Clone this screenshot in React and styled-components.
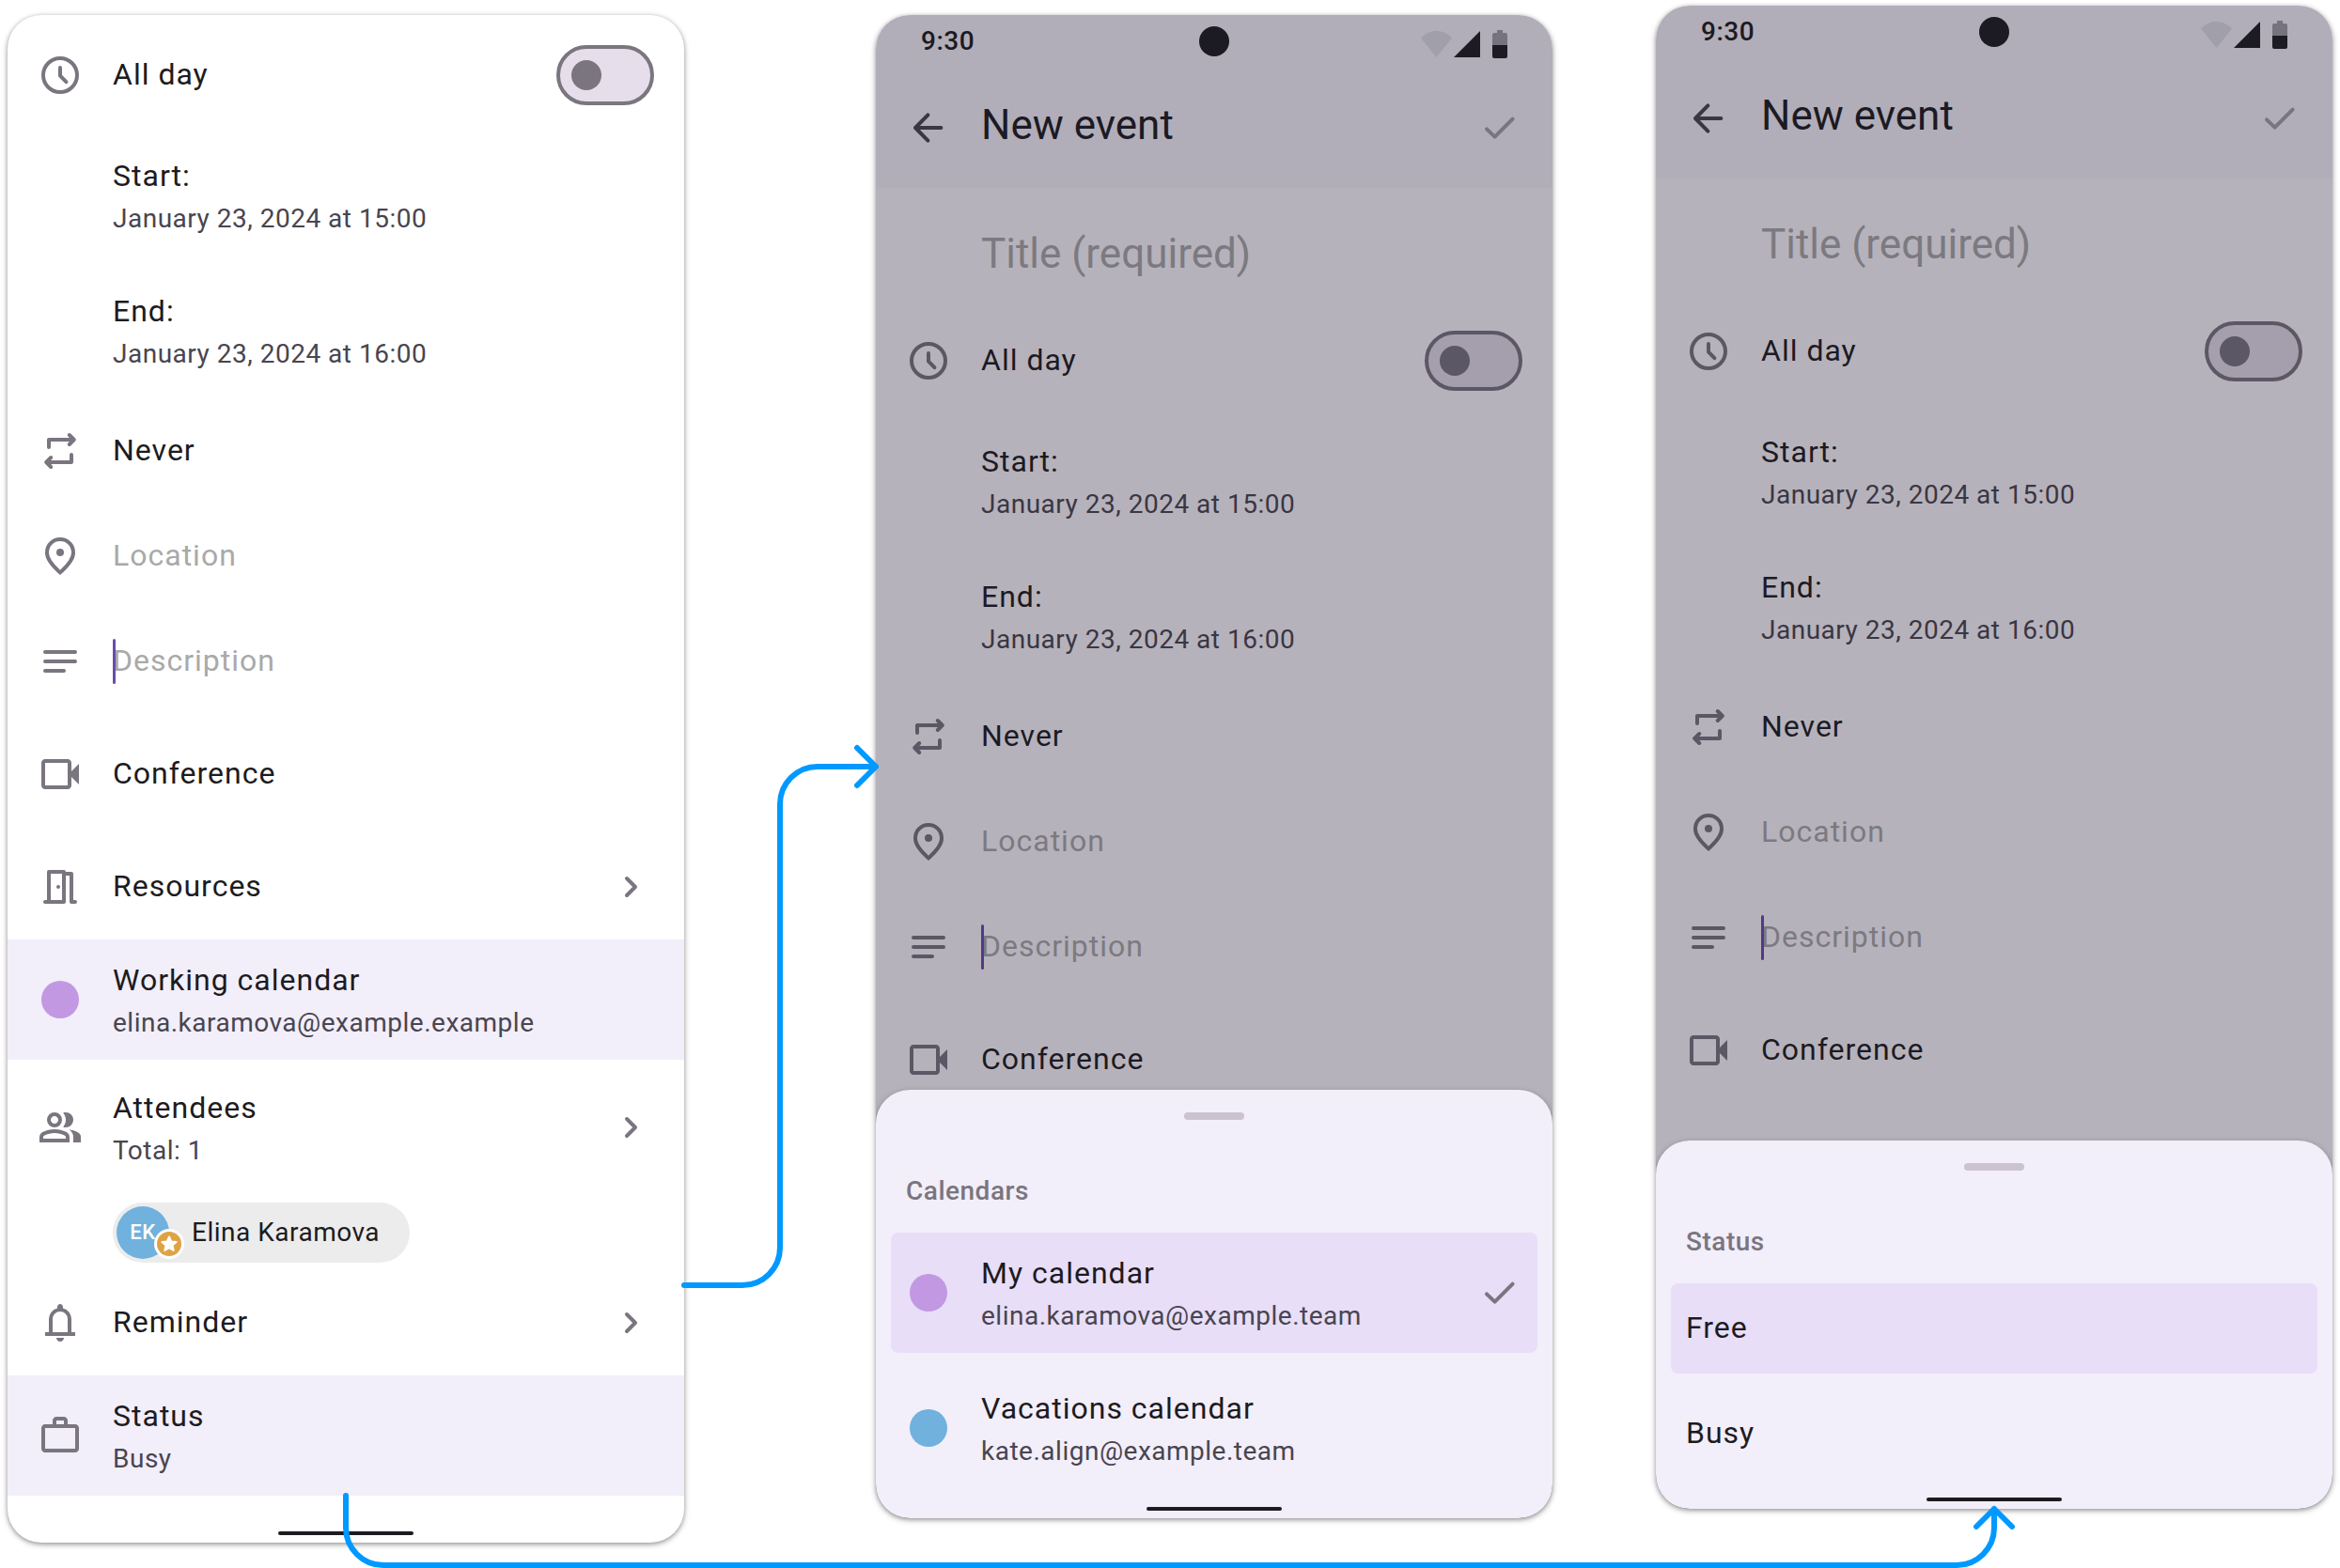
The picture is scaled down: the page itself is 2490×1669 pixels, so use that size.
import React from "react";
import styled, { createGlobalStyle, css } from "styled-components";

const color = {
  ink: "#1d1b20",
  inkSoft: "#49454f",
  icon: "#7a757f",
  hint: "#a9a9a9",
  page: "#fffbff",
  bar: "#f8f5fd",
  surface: "#f2eefa",
  selected: "#e8def8",
  purple: "#c298e2",
  blue: "#70b1dd",
  flow: "#0099ff",
};

const GlobalStyle = createGlobalStyle`
  *, *::before, *::after { box-sizing: border-box; }
  body {
    margin: 0;
    background: #fff;
    color: ${color.ink};
    font-family: Roboto, "Liberation Sans", sans-serif;
  }
  button, input { font: inherit; color: inherit; }
`;

/* ---------- text styles ---------- */

const bodyLarge = css`
  font-size: 32px;
  line-height: 48px;
  letter-spacing: 1px;
`;

const bodyMedium = css`
  font-size: 28px;
  line-height: 40px;
  letter-spacing: 0.018em;
`;

const titleLarge = css`
  font-size: 44px;
  line-height: 56px;
`;

/* ---------- canvas ---------- */

const Canvas = styled.main`
  position: relative;
  display: grid;
  grid-template-columns: 720fr 204fr 720fr 110fr 720fr;
  align-items: start;
  padding: 6px 8px 27px;
`;

const Connectors = styled.svg`
  position: absolute;
  inset: 0;
  width: 100%;
  height: 100%;
  pointer-events: none;
  fill: none;
  stroke: ${color.flow};
  stroke-width: 6px;
  stroke-linecap: round;
  stroke-linejoin: round;
`;

const Card = styled.section`
  grid-column: ${(p) => p.$column};
  margin-top: ${(p) => (p.$lowered ? "10px" : 0)};
  position: relative;
  overflow: hidden;
  display: flex;
  flex-direction: column;
  border-radius: 36px;
  background: #fff;
  box-shadow: 0 2px 6px rgba(0, 0, 0, 0.3), 0 1px 4px rgba(0, 0, 0, 0.2);
`;

const FormCard = styled(Card)`
  padding-top: 8px;
`;

const PhoneCard = styled(Card)`
  aspect-ratio: 9 / 20;
  background: ${color.page};
`;

/* ---------- rows ---------- */

const rowHeights = { line: "112px", tall: "128px", double: "144px" };

const rowStyle = css`
  display: flex;
  align-items: center;
  gap: 32px;
  width: 100%;
  min-height: ${(p) => rowHeights[p.$size || "line"]};
  padding: 0 32px;
  border: 0;
  background: ${(p) => (p.$tinted ? color.surface : "transparent")};
  text-align: left;
`;

const RowButton = styled.button`
  ${rowStyle}
  cursor: pointer;
`;

const RowLabel = styled.label`
  ${rowStyle}
`;

const Lead = styled.span`
  flex: none;
  display: grid;
  place-items: center;
  width: 48px;
  height: 48px;
  color: ${color.icon};
`;

const Dot = styled.span`
  width: 40px;
  height: 40px;
  border-radius: 50%;
  background: ${(p) => p.$fill};
`;

const TextBlock = styled.span`
  flex: 1;
  min-width: 0;
  display: flex;
  flex-direction: column;
`;

const Primary = styled.span`
  ${bodyLarge}
  padding-bottom: 2px;
`;

const Secondary = styled.span`
  ${bodyMedium}
  color: ${color.inkSoft};
`;

const Field = styled.span`
  flex: 1;
  min-width: 0;
  position: relative;
  display: flex;
`;

const Caret = styled.span`
  position: absolute;
  left: 0;
  top: 0;
  bottom: 0;
  width: 3px;
  border-radius: 2px;
  background: #6a4bb0;
`;

const TextInput = styled.input`
  ${bodyLarge}
  width: 100%;
  height: 48px;
  padding: 0 0 2px;
  border: 0;
  outline: 0;
  background: transparent;
  &::placeholder {
    color: ${color.hint};
    opacity: 1;
  }
`;

const Switch = styled.input`
  appearance: none;
  flex: none;
  display: flex;
  align-items: center;
  width: 104px;
  height: 64px;
  margin: 0;
  padding: 0 12px;
  border: 4px solid ${color.icon};
  border-radius: 32px;
  background: #e6deeb;
  &::before {
    content: "";
    width: 32px;
    height: 32px;
    border-radius: 50%;
    background: ${color.icon};
  }
  &:checked {
    justify-content: flex-end;
  }
`;

const ChipLine = styled.div`
  display: flex;
  padding: 8px 32px 8px 112px;
`;

const Chip = styled.button`
  ${bodyMedium}
  display: flex;
  align-items: center;
  gap: 24px;
  height: 64px;
  padding: 0 32px 0 4px;
  border: 0;
  border-radius: 32px;
  background: #ececec;
`;

const Avatar = styled.span`
  position: relative;
  display: grid;
  place-items: center;
  width: 56px;
  height: 56px;
  border-radius: 50%;
  background: ${color.blue};
  color: #fff;
  font-size: 22px;
  font-weight: 500;
`;

const Badge = styled.svg`
  position: absolute;
  right: -16px;
  bottom: 0;
  width: 32px;
  height: 32px;
`;

const HomeBar = styled.div`
  align-self: center;
  width: 20%;
  height: 4px;
  margin: ${(p) => (p.$roomy ? "38px" : "20px")} 0 8px;
  border-radius: 2px;
  background: ${color.ink};
`;

/* ---------- phone header ---------- */

const Header = styled.header`
  background: ${color.bar};
`;

const StatusBar = styled.div`
  ${bodyMedium}
  display: grid;
  grid-template-columns: 1fr auto 1fr;
  align-items: center;
  height: 56px;
  padding: 0 48px;
  font-weight: 500;
`;

const Camera = styled.span`
  width: 32px;
  height: 32px;
  border-radius: 50%;
  background: ${color.ink};
`;

const StatusIcons = styled.svg`
  justify-self: end;
  width: 92px;
  height: 40px;
`;

const AppBar = styled.div`
  display: flex;
  align-items: center;
  gap: 32px;
  height: 128px;
  padding: 0 32px;
`;

const ScreenTitle = styled.h1`
  ${titleLarge}
  flex: 1;
  margin: 0 0 6px;
  font-weight: 400;
`;

const IconButton = styled.button`
  display: grid;
  place-items: center;
  width: 48px;
  height: 48px;
  padding: 0;
  border: 0;
  background: transparent;
  color: ${(p) => (p.$muted ? "#a4a1a8" : color.inkSoft)};
`;

const TitleLine = styled.div`
  padding: 42px 32px 30px 112px;
`;

const TitleInput = styled(TextInput)`
  ${titleLarge}
  display: block;
  height: 56px;
  padding: 0;
  letter-spacing: normal;
`;

/* ---------- bottom sheet ---------- */

const Scrim = styled.div`
  position: absolute;
  inset: 0;
  background: rgba(29, 25, 43, 0.32);
`;

const Sheet = styled.div`
  position: absolute;
  left: 0;
  right: 0;
  bottom: 0;
  display: flex;
  flex-direction: column;
  padding-top: 24px;
  border-radius: 36px;
  background: ${color.surface};
  box-shadow: 0 2px 6px rgba(0, 0, 0, 0.3);
`;

const Grip = styled.span`
  align-self: center;
  width: 64px;
  height: 8px;
  border-radius: 4px;
  background: #cbc3d0;
`;

const SheetLabel = styled.h2`
  ${bodyMedium}
  margin: 56px 32px 24px;
  color: ${color.icon};
  font-weight: 500;
`;

const Options = styled.div`
  display: flex;
  flex-direction: column;
  gap: 16px;
  padding: 0 16px;
`;

const Option = styled.button`
  display: flex;
  align-items: center;
  gap: 32px;
  min-height: ${(p) => (p.$compact ? "96px" : "128px")};
  padding: 0 16px;
  border: 0;
  border-radius: 8px;
  background: ${(p) => (p["aria-pressed"] ? color.selected : "transparent")};
  text-align: left;
`;

/* ---------- icons ---------- */

const Glyph = styled.svg`
  width: 48px;
  height: 48px;
  ${(p) =>
    p.$line
      ? css`
          fill: none;
          stroke: currentColor;
          stroke-width: 2px;
          stroke-linecap: round;
          stroke-linejoin: round;
        `
      : css`
          fill: currentColor;
        `}
`;

const Line = ({ children }) => (
  <Glyph $line viewBox="0 0 24 24" aria-hidden="true">
    {children}
  </Glyph>
);

const Solid = ({ d, children }) => (
  <Glyph viewBox="0 -960 960 960" aria-hidden="true">
    <path d={d} />
    {children}
  </Glyph>
);

const ClockIcon = () => (
  <Line>
    <circle cx="12" cy="12" r="9" />
    <path d="M12 8v4.300l3.200 3.300" />
  </Line>
);
const RepeatIcon = () => (
  <Line>
    <path d="M6 10V6h13.400M16.900 3.500 19.400 6l-2.500 2.500M18 14v4H4.600M7.100 15.500 4.600 18l2.500 2.500" />
  </Line>
);
const PinIcon = () => (
  <Solid d="M480-186q122-112 181-203.500T720-552q0-109-69.500-178.500T480-800q-101 0-170.500 69.500T240-552q0 71 59 162.500T480-186Zm0 106Q319-217 239.500-334.500T160-552q0-150 96.500-239T480-880q127 0 223.500 89T800-552q0 100-79.500 217.500T480-80Z">
    <circle cx="480" cy="-560" r="80" />
  </Solid>
);
const NotesIcon = () => (
  <Line>
    <path d="M4 7h16M4 12h16M4 17h10" />
  </Line>
);
const VideoIcon = () => (
  <Solid d="M160-160q-33 0-56.500-23.500T80-240v-480q0-33 23.500-56.500T160-800h480q33 0 56.500 23.500T720-720v180l160-160v440L720-420v180q0 33-23.500 56.500T640-160H160Zm0-80h480v-480H160v480Z" />
);
const DoorIcon = () => (
  <Line>
    <path d="M4 20h10V4H6v16M14 5h4v15h2" />
    <circle cx="11" cy="12" r="1" fill="currentColor" stroke="none" />
  </Line>
);
const ChevronIcon = () => (
  <Line>
    <path d="M9.500 7.500 14 12l-4.500 4.500" />
  </Line>
);
const GroupIcon = () => (
  <Solid d="M40-160v-112q0-34 17.500-62.500T104-378q62-31 126-46.500T360-440q66 0 130 15.500T616-378q29 15 46.500 43.500T680-272v112H40Zm720 0v-120q0-44-24.500-84.500T666-434q51 6 96 20.500t84 35.500q36 20 55 44.500t19 53.500v120H760ZM360-480q-66 0-113-47t-47-113q0-66 47-113t113-47q66 0 113 47t47 113q0 66-47 113t-113 47Zm400-160q0 66-47 113t-113 47q-11 0-28-2.500t-28-5.500q27-32 41.500-71t14.500-81q0-42-14.500-81T544-792q14-5 28-6.500t28-1.500q66 0 113 47t47 113ZM120-240h480v-32q0-11-5.500-20T580-306q-54-27-109-40.500T360-360q-56 0-111 13.500T140-306q-9 5-14.500 14t-5.500 20v32Zm240-320q33 0 56.500-23.500T440-640q0-33-23.500-56.500T360-720q-33 0-56.500 23.500T280-640q0 33 23.500 56.500T360-560Z" />
);
const BellIcon = () => (
  <Solid d="M160-200v-80h80v-280q0-83 50-147.500T420-792v-28q0-25 17.500-42.500T480-880q25 0 42.500 17.500T540-820v28q80 20 130 84.500T720-560v280h80v80H160ZM480-80q-33 0-56.500-23.500T400-160h160q0 33-23.500 56.500T480-80ZM320-280h320v-280q0-66-47-113t-113-47q-66 0-113 47t-47 113v280Z" />
);
const CaseIcon = () => (
  <Solid d="M160-120q-33 0-56.500-23.500T80-200v-440q0-33 23.500-56.500T160-720h160v-80q0-33 23.500-56.500T400-880h160q33 0 56.500 23.500T640-800v80h160q33 0 56.500 23.500T880-640v440q0 33-23.500 56.500T800-120H160Zm0-80h640v-440H160v440Zm240-520h160v-80H400v80Z" />
);
const BackIcon = () => (
  <Line>
    <path d="M18.700 12H5M11.700 5.200 5 12l6.700 6.800" />
  </Line>
);
const CheckIcon = () => (
  <Line>
    <path d="M5 12.700l4.300 4.100 9.500-9.500" />
  </Line>
);

/* ---------- form ---------- */

function Row({ icon, title, note, more, size, tinted }) {
  return (
    <RowButton type="button" $size={size} $tinted={tinted}>
      <Lead>{icon}</Lead>
      <TextBlock>
        <Primary>{title}</Primary>
        {note && <Secondary>{note}</Secondary>}
      </TextBlock>
      {more && (
        <Lead>
          <ChevronIcon />
        </Lead>
      )}
    </RowButton>
  );
}

function FieldRow({ icon, name, active }) {
  return (
    <RowLabel>
      <Lead>{icon}</Lead>
      <Field>
        <TextInput type="text" placeholder={name} aria-label={name} />
        {active && <Caret />}
      </Field>
    </RowLabel>
  );
}

function EventFields() {
  return (
    <>
      <RowLabel>
        <Lead>
          <ClockIcon />
        </Lead>
        <TextBlock>
          <Primary>All day</Primary>
        </TextBlock>
        <Switch type="checkbox" role="switch" />
      </RowLabel>
      <Row title="Start:" note="January 23, 2024 at 15:00" size="double" />
      <Row title="End:" note="January 23, 2024 at 16:00" size="double" />
      <Row icon={<RepeatIcon />} title="Never" />
      <FieldRow icon={<PinIcon />} name="Location" />
      <FieldRow icon={<NotesIcon />} name="Description" active />
      <Row icon={<VideoIcon />} title="Conference" size="tall" />
    </>
  );
}

function EventPhone({ column, lowered, sheetTitle, children }) {
  return (
    <PhoneCard $column={column} $lowered={lowered}>
      <Header>
        <StatusBar>
          <span>9:30</span>
          <Camera />
          <StatusIcons viewBox="0 0 92 40" aria-hidden="true">
            <path d="M0 16.500C9 6.500 24 6.500 33 16.500L16.500 37Z" fill={color.ink} opacity="0.1" />
            <path d="M35 37 63 9v28Z" fill={color.ink} />
            <path d="M81 8h6v3h3a2 2 0 0 1 2 2v11H76V13a2 2 0 0 1 2-2h3Z" fill={color.ink} opacity="0.4" />
            <path d="M76 24h16v12a2 2 0 0 1-2 2H78a2 2 0 0 1-2-2Z" fill={color.ink} />
          </StatusIcons>
        </StatusBar>
        <AppBar>
          <IconButton type="button" aria-label="Back">
            <BackIcon />
          </IconButton>
          <ScreenTitle>New event</ScreenTitle>
          <IconButton type="button" aria-label="Save" $muted>
            <CheckIcon />
          </IconButton>
        </AppBar>
      </Header>
      <TitleLine>
        <TitleInput type="text" placeholder="Title (required)" aria-label="Title" />
      </TitleLine>
      <EventFields />
      <Scrim />
      <Sheet role="dialog" aria-label={sheetTitle}>
        <Grip />
        <SheetLabel>{sheetTitle}</SheetLabel>
        <Options>{children}</Options>
        <HomeBar />
      </Sheet>
    </PhoneCard>
  );
}

function CalendarOption({ fill, name, email, selected }) {
  return (
    <Option type="button" aria-pressed={!!selected}>
      <Lead>
        <Dot $fill={fill} />
      </Lead>
      <TextBlock>
        <Primary>{name}</Primary>
        <Secondary>{email}</Secondary>
      </TextBlock>
      {selected && (
        <Lead>
          <CheckIcon />
        </Lead>
      )}
    </Option>
  );
}

export default function App() {
  return (
    <>
      <GlobalStyle />
      <Canvas>
        <FormCard $column={1} $lowered>
          <EventFields />
          <Row icon={<DoorIcon />} title="Resources" more />
          <Row
            icon={<Dot $fill={color.purple} />}
            title="Working calendar"
            note="elina.karamova@example.example"
            size="tall"
            tinted
          />
          <Row icon={<GroupIcon />} title="Attendees" note="Total: 1" size="double" more />
          <ChipLine>
            <Chip type="button">
              <Avatar>
                EK
                <Badge viewBox="0 0 32 32" aria-hidden="true">
                  <circle cx="16" cy="16" r="16" fill="#fff" />
                  <circle cx="16" cy="16" r="13" fill="#dfa345" />
                  <path
                    d="M16 8.500l2.200 5 5.400.5-4.100 3.600 1.200 5.300-4.700-2.800-4.700 2.800 1.200-5.300-4.100-3.600 5.400-.5Z"
                    fill="#fff"
                    stroke="#fff"
                    strokeWidth="2"
                    strokeLinejoin="round"
                  />
                </Badge>
              </Avatar>
              Elina Karamova
            </Chip>
          </ChipLine>
          <Row icon={<BellIcon />} title="Reminder" more />
          <Row icon={<CaseIcon />} title="Status" note="Busy" size="tall" tinted />
          <HomeBar $roomy />
        </FormCard>

        <EventPhone column={3} lowered sheetTitle="Calendars">
          <CalendarOption
            fill={color.purple}
            name="My calendar"
            email="elina.karamova@example.team"
            selected
          />
          <CalendarOption
            fill={color.blue}
            name="Vacations calendar"
            email="kate.align@example.team"
          />
        </EventPhone>

        <EventPhone column={5} sheetTitle="Status">
          <Option type="button" aria-pressed={true} $compact>
            <Primary>Free</Primary>
          </Option>
          <Option type="button" aria-pressed={false} $compact>
            <Primary>Busy</Primary>
          </Option>
        </EventPhone>

        <Connectors viewBox="0 0 2490 1669" preserveAspectRatio="none" aria-hidden="true">
          <path d="M728 1368h62a40 40 0 0 0 40-40V856a40 40 0 0 1 40-40h62M912 796l20 20-20 20" />
          <path d="M368 1592v34a40 40 0 0 0 40 40h1674a40 40 0 0 0 40-40v-20M2103 1625l19-19 19 19" />
        </Connectors>
      </Canvas>
    </>
  );
}
